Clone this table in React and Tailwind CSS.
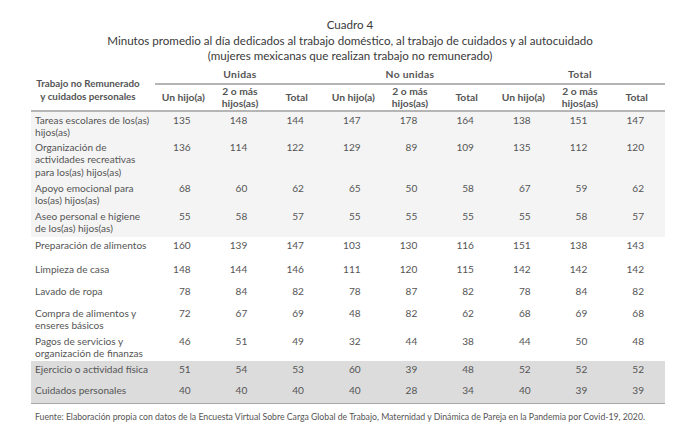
import React from "react";

const rows = [
  { label: ["Tareas escolares de los(as)", "hijos(as)"], v: [135, 148, 144, 147, 178, 164, 138, 151, 147], h: "h-[28px]", bg: "bg-[#f4f4f4]" },
  { label: ["Organización de", "actividades recreativas", "para los(as) hijos(as)"], v: [136, 114, 122, 129, 89, 109, 135, 112, 120], h: "h-[41px]", bg: "bg-[#f4f4f4]" },
  { label: ["Apoyo emocional para", "los(as) hijos(as)"], v: [68, 60, 62, 65, 50, 58, 67, 59, 62], h: "h-[28px]", bg: "bg-[#f4f4f4]" },
  { label: ["Aseo personal e higiene", "de los(as) hijos(as)"], v: [55, 58, 57, 55, 55, 55, 55, 58, 57], h: "h-[29px]", bg: "bg-[#f4f4f4]" },
  { label: ["Preparación de alimentos"], v: [160, 139, 147, 103, 130, 116, 151, 138, 143], h: "h-[24px]", bg: "bg-white" },
  { label: ["Limpieza de casa"], v: [148, 144, 146, 111, 120, 115, 142, 142, 142], h: "h-[22px]", bg: "bg-white" },
  { label: ["Lavado de ropa"], v: [78, 84, 82, 78, 87, 82, 78, 84, 82], h: "h-[22px]", bg: "bg-white" },
  { label: ["Compra de alimentos y", "enseres básicos"], v: [72, 67, 69, 48, 82, 62, 68, 69, 68], h: "h-[28px]", bg: "bg-white" },
  { label: ["Pagos de servicios y", "organización de finanzas"], v: [46, 51, 49, 32, 44, 38, 44, 50, 48], h: "h-[28px]", bg: "bg-white" },
  { label: ["Ejercicio o actividad física"], v: [51, 54, 53, 60, 39, 48, 52, 52, 52], h: "h-[21px]", bg: "bg-[#dcdcdc]" },
  { label: ["Cuidados personales"], v: [40, 40, 40, 40, 28, 34, 40, 39, 39], h: "h-[22px]", bg: "bg-[#dcdcdc]" },
];

const groups = ["Unidas", "No unidas", "Total"];

export default function App() {
  return (
    <div className="w-[700px] h-[445px] bg-white text-[#555] font-['Lato','Liberation_Sans',sans-serif] overflow-hidden">
      <div className="pt-[17px] text-center text-[11.6px] leading-[15.5px] text-[#3a3a3a]">
        <div>Cuadro 4</div>
        <div>Minutos promedio al día dedicados al trabajo doméstico, al trabajo de cuidados y al autocuidado</div>
        <div>(mujeres mexicanas que realizan trabajo no remunerado)</div>
      </div>

      <table className="mt-[2px] ml-[31px] w-[634px] table-fixed border-collapse text-[10.1px] leading-[12.5px]">
        <colgroup>
          <col className="w-[124px]" />
          {Array.from({ length: 9 }).map((_, i) => (
            <col key={i} className="w-[56.67px]" />
          ))}
        </colgroup>
        <thead>
          <tr className="h-[18px]">
            <th rowSpan={2} className="border-b-2 border-[#b5b5b5] pt-[4px] pr-[10px] text-center align-middle text-[9.8px] font-bold">
              Trabajo no Remunerado
              <br />y cuidados personales
            </th>
            {groups.map((g) => (
              <th key={g} colSpan={3} className="border-b-2 border-[#b5b5b5] text-center align-middle text-[10.3px] font-bold tracking-[0.3px]">
                {g}
              </th>
            ))}
          </tr>
          <tr className="h-[27px]">
            {groups.map((g) => (
              <React.Fragment key={g}>
                <th className="border-b-2 border-[#b5b5b5] text-center align-middle text-[10.3px] font-bold">Un hijo(a)</th>
                <th className="border-b-2 border-[#b5b5b5] text-center align-middle text-[10.3px] font-bold">
                  2 o más
                  <br />
                  hijos(as)
                </th>
                <th className="border-b-2 border-[#b5b5b5] text-center align-middle text-[10.3px] font-bold">Total</th>
              </React.Fragment>
            ))}
          </tr>
        </thead>
        <tbody>
          {rows.map((r, i) => (
            <tr key={i} className={`${r.h} ${r.bg} ${i === rows.length - 1 ? "border-b-[1.5px] border-[#a8a8a8]" : ""}`}>
              <td className="pl-[4px] pt-[2px] align-top">
                {r.label.map((l, j) => (
                  <div key={j} className="whitespace-nowrap">{l}</div>
                ))}
              </td>
              {r.v.map((n, j) => (
                <td key={j} className="pr-[21px] pt-[2px] text-right align-top">
                  {n}
                </td>
              ))}
            </tr>
          ))}
        </tbody>
      </table>

      <div className="mt-[7px] pl-[35px] whitespace-nowrap text-[8.7px] leading-[12px] text-[#555]">
        Fuente: Elaboración propia con datos de la Encuesta Virtual Sobre Carga Global de Trabajo, Maternidad y Dinámica de Pareja en la Pandemia por Covid-19, 2020.
      </div>
    </div>
  );
}
